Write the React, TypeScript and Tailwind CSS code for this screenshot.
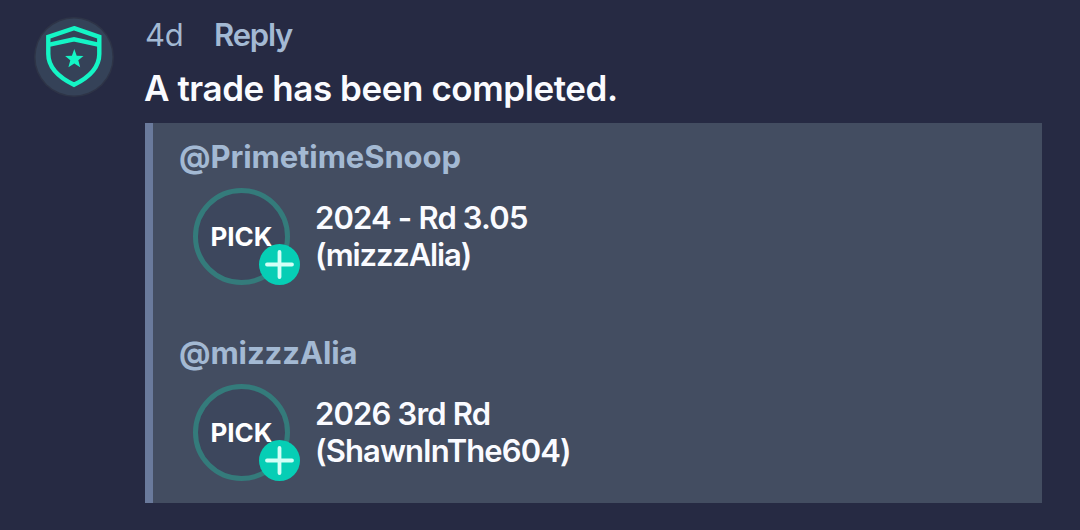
import type { JSX } from "react";

type Trade = {
  manager: string;
  pick: string;
  origin: string;
};

const TRADES: Trade[] = [
  { manager: "@PrimetimeSnoop", pick: "2024 - Rd 3.05", origin: "(mizzzAlia)" },
  { manager: "@mizzzAlia", pick: "2026 3rd Rd", origin: "(ShawnInThe604)" },
];

function ShieldAvatar() {
  return (
    <svg className="size-20 shrink-0" viewBox="0 0 80 80" fill="none">
      <circle cx="40" cy="40" r="40" fill="#2e3447" />
      <circle cx="40" cy="40" r="38.5" fill="#354258" />
      <g stroke="#14f5c5" strokeWidth="4.4">
        <path d="M40 11.200 65.300 19.800V37C65.300 50 55 60.500 40 67.800 25 60.500 14.300 50 14.300 37V19.800Z" />
        <path d="M14.300 27.800 40 22.300 65.300 27.800" />
      </g>
      <path
        d="M40.300 32 42.700 38.700 49.500 39 44.300 43.300 46.200 50.300 40.300 46.500 34.400 50.300 36.300 43.300 31.100 39 37.900 38.700Z"
        fill="#14f5c5"
      />
    </svg>
  );
}

function PickBadge() {
  return (
    <div className="relative flex size-[97px] shrink-0 items-center justify-center rounded-full border-[5px] border-[#347b7b] bg-[#3d475d]">
      <span className="pt-px text-[26px] leading-none font-bold text-white">
        PICK
      </span>
      <svg
        className="absolute -right-[15px] -bottom-[5px] size-[41px]"
        viewBox="0 0 41 41"
      >
        <circle cx="20.5" cy="20.5" r="20.5" fill="#06ceb5" />
        <path
          d="M20.5 8V33M8 20.500H33"
          stroke="#d3fff7"
          strokeWidth="3.8"
          strokeLinecap="round"
        />
      </svg>
    </div>
  );
}

function TradeSide({ manager, pick, origin }: Trade) {
  return (
    <section className="h-[196px]">
      <h3 className="text-[31px] leading-[38px] font-bold tracking-[-0.09px] text-[#a3b9d3]">
        {manager}
      </h3>
      <div className="mt-[12px] ml-[14px] flex items-center gap-[25px]">
        <PickBadge />
        <p className="-mt-px text-[31px] leading-[37px] font-semibold text-[#fafbff]">
          <span className="block tracking-[-0.84px]">{pick}</span>
          <span
            className={
              origin.length > 12
                ? "block tracking-[-0.9px]"
                : "block tracking-[-1.15px]"
            }
          >
            {origin}
          </span>
        </p>
      </div>
    </section>
  );
}

export default function App(): JSX.Element {
  return (
    <main className="flex h-[530px] w-[1080px] gap-[31px] overflow-hidden bg-[#262a43] pt-[17px] pr-[38px] pl-[34px] font-[Inter,sans-serif]">
      <ShieldAvatar />
      <div className="min-w-0 flex-1">
        <div className="flex gap-[31px] text-[31px] leading-[36px] text-[#a3b9d3]">
          <span className="w-[38px] tracking-[-0.3px]">4d</span>
          <button className="font-semibold tracking-[-1.2px]">Reply</button>
        </div>
        <p className="mt-[13px] -ml-px text-[35px] leading-[44px] font-semibold tracking-[-0.43px] text-[#fafbff]">
          A trade has been completed.
        </p>
        <div className="mt-[13px] h-[380px] border-l-8 border-[#6a7a9c] bg-[#434d61] pt-[15px] pl-[26px]">
          {TRADES.map((trade) => (
            <TradeSide key={trade.manager} {...trade} />
          ))}
        </div>
      </div>
    </main>
  );
}
